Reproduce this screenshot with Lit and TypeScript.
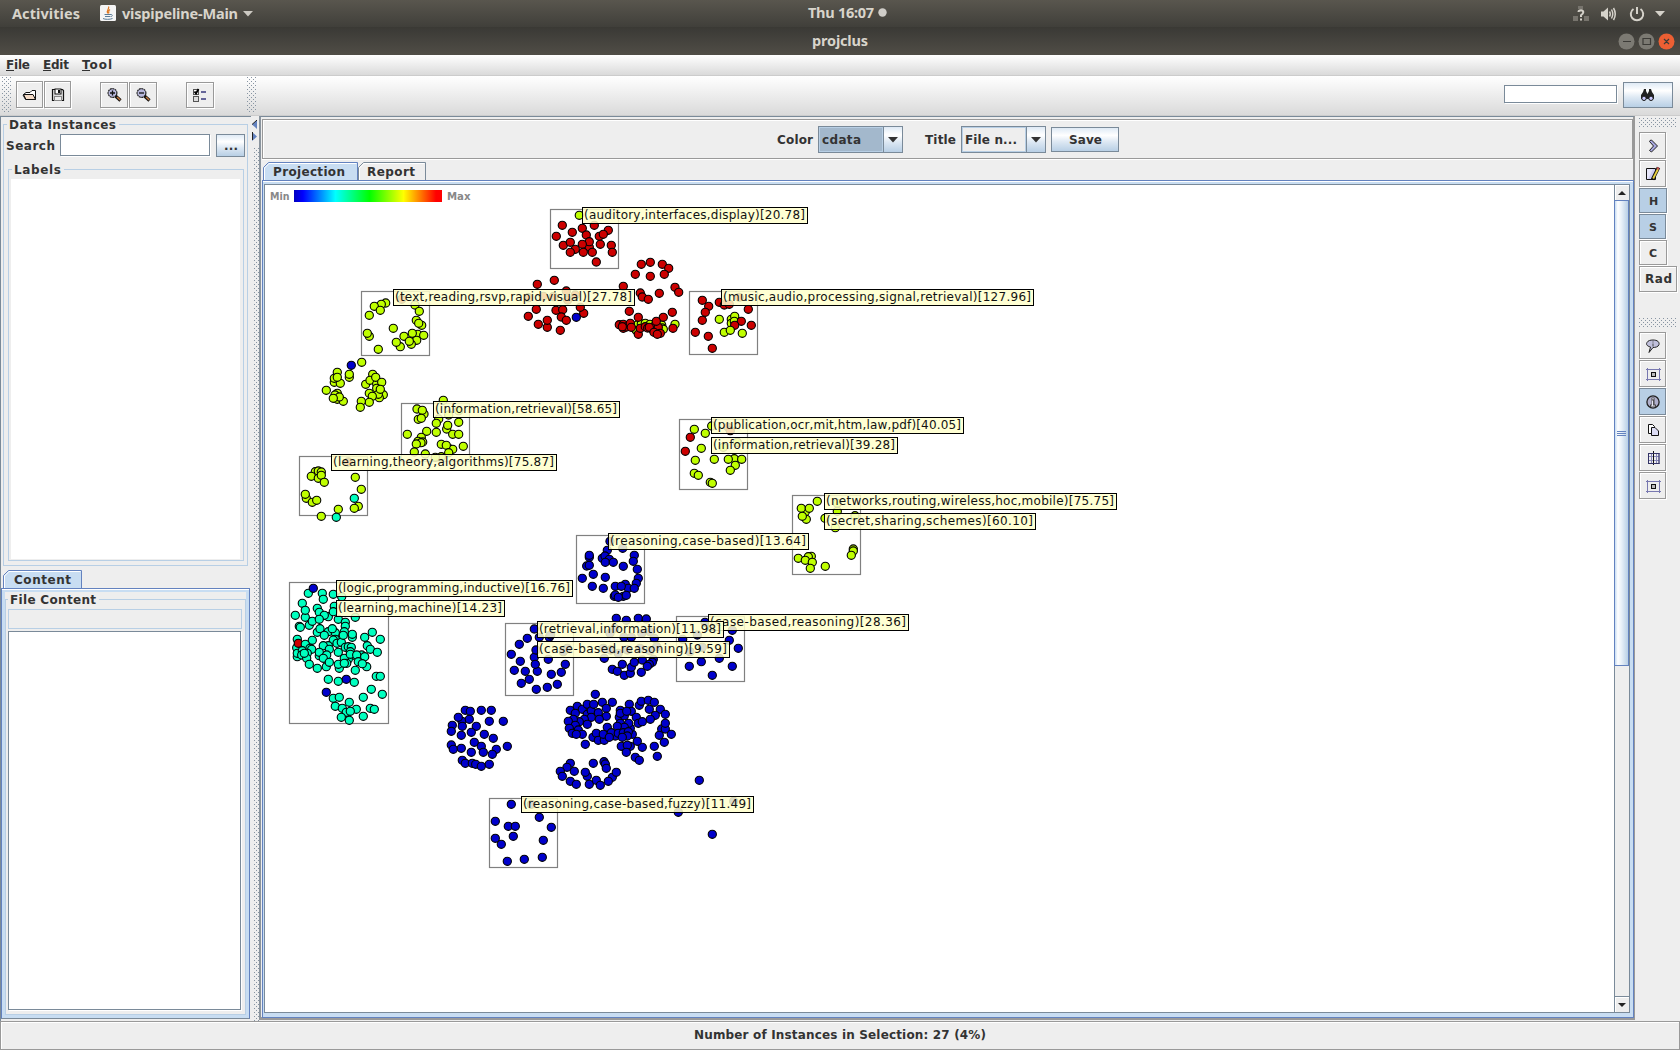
import { LitElement, html, svg, css, TemplateResult } from "lit";
import { customElement } from "lit/decorators.js";

type Group = { x: number; y: number; pts: string };
type Box = [number, number, number, number];
type Tag = [number, number, number, string];

const COLORS: Record<string, string> = { b: "#0000cc", r: "#cc0000", t: "#00ffbf", l: "#bfff00" };

// Points are "x,y" in thirds of a pixel from the group origin; a letter switches the class colour.
const GROUPS: Group[] = [
  { x: 280, y: 260, pts: "r 365,118 l 317,129 304,133 283,139 301,151 268,166 405,135 418,154 409,181 425,196 416,190 340,205 268,229 262,220 372,229 413,223 397,220 431,226 410,241 394,253 388,244 361,260 349,247 295,268 b 214,316 l 245,307 172,337 163,367 163,355 181,370 172,352 208,352 208,343 139,391 172,400 165,405 172,418 190,424 178,411 160,415 278,343 257,373 270,361 290,372 287,352 305,367 290,385 268,400 310,404 298,413 295,403 301,388 277,409 268,427 244,424 241,442" },
  { x: 280, y: 260, pts: "l 490,421 411,447 432,462 427,451 415,478 424,475 382,523 440,514 469,517 476,477 506,465 536,452 469,490 500,507 503,496 536,487 518,523 536,523 424,532 428,546 414,544 423,548 409,552 403,576 436,582 484,553 509,567 518,568 499,556 550,559 484,590 506,578 466,592 r 205,606 l 106,635 115,633 124,636 94,649 115,655 124,646 133,667 226,652 244,688 79,715 76,703 97,727 110,721 t 223,715 l 235,739 223,745 175,748 124,769 t 169,772" },
  { x: 500, y: 190, pts: "r 112,283 163,271 85,323 199,303 130,319 160,320 203,330 226,315 109,358 85,379 115,403 142,412 142,391 168,361 188,359 184,381 199,391 251,370 241,352 b 229,382 r 181,421 l 238,76 r 187,106 247,115 283,106 325,121 217,127 169,139 259,135 298,139 310,133 190,166 211,157 268,172 268,155 247,163 301,163 334,166 337,187 226,178 211,187 250,187 277,187 289,216" },
  { x: 500, y: 190, pts: "r 424,223 451,217 487,223 506,235 406,253 493,253 451,259 370,289 525,292 536,307 421,309 427,321 445,328 478,310 388,364 517,367 l 408,420 412,405 424,402 436,400 450,403 410,422 485,405 487,414 490,418 r 415,382 490,382 358,404 370,415 370,403 379,411 391,400 367,410 394,412 415,433 421,415 436,410 443,414 460,421 466,405 475,412 469,394 448,412 462,427 481,430 472,433 l 525,403 r 519,415" },
  { x: 500, y: 190, pts: "r 607,331 626,349 616,367 658,337 673,345 688,343 745,358 718,322 607,391 l 658,388 694,388 704,379 694,400 703,394 r 724,394 704,406 754,406 586,427 625,439 637,475 l 673,427 691,421 727,430" },
  { x: 660, y: 400, pts: "l 103,88 155,78 136,100 r 205,82 211,92 91,112 76,154 l 190,142 232,127 124,145 106,181 163,178 223,176 205,178 245,178 226,196 211,211 103,220 115,226 151,247 157,250 472,304 436,335 424,325 448,325 439,358 427,349 495,355 532,310 532,334 585,347 526,383 580,447 580,453 574,466 415,475 454,469 445,470 436,481 457,487 451,505 496,499" },
  { x: 280, y: 560, pts: "t 85,100 b 100,85 t 127,100 130,118 160,103 185,110 67,130 76,172 76,151 46,166 112,145 118,157 145,170 133,166 88,196 97,184 118,178 58,199 61,202 163,139 160,155 175,178 196,187 196,199 226,172 112,217 120,206 145,215 166,218 157,206 133,226 193,215 217,232 217,223 166,238 160,240 171,250 184,247 190,226 277,217 254,232 301,238 52,238 97,241 50,263 r 55,250 t 52,290 52,280 76,253 90,265 95,268 82,280 67,272 65,285 80,295 73,280 88,313 145,257 130,257 148,268 118,287 118,277 140,285 130,295 139,320 148,307 112,325 175,277 196,262 205,260 214,262 178,325 175,313 205,298 193,295 200,310 193,310 211,275 230,290 211,283 245,285 230,285 254,290 235,305 260,320 247,311 226,331 262,257 271,268 292,277 145,358 175,364 b 199,358 t 223,367 289,349 301,349 b 139,397 t 160,415 178,412 166,439 208,427 187,445 199,457 229,448 211,454 184,472 208,481 250,469 250,412 274,388 307,403 271,445 283,448" },
  { x: 490, y: 520, pts: "b 360,64 352,91 398,85 298,112 298,106 290,138 298,136 337,115 345,108 358,118 346,127 370,127 433,106 430,124 400,139 442,148 277,175 310,163 346,172 307,199 340,205 445,175 439,190 406,193 376,199 415,205 433,205 394,199 373,229 376,225 400,229 409,226 385,232 133,327 112,355 88,373 64,403 91,424 73,451 106,454 133,412 142,454 136,433 138,390 148,352 178,352 182,345 220,395 232,385 175,418 226,433 214,457 184,463 118,478 94,490 139,508 172,502 202,493" },
  { x: 490, y: 520, pts: "b 379,295 409,301 445,295 469,297 374,325 360,340 402,352 424,352 455,340 480,335 493,355 340,385 362,390 385,400 412,390 450,385 480,392 500,380 343,415 397,433 367,448 382,454 403,466 421,460 424,442 433,427 457,420 490,418 487,427 478,433 472,439 454,457 645,307 727,331 718,361 745,385 578,358 622,345 600,395 637,382 634,425 688,415 598,439 727,439 667,466" },
  { x: 430, y: 680, pts: "b 106,91 121,94 154,91 184,91 96,124 85,112 118,118 178,124 220,124 67,136 97,139 139,139 64,154 94,166 124,157 163,163 190,175 133,187 64,195 70,208 94,205 154,199 124,217 160,217 199,208 187,223 232,199 97,241 106,250 127,250 137,253 154,259 178,253 421,250 411,262 391,274 433,274 397,289 421,304 439,313 490,250 522,245 526,252 529,265 472,289 466,277 478,313 499,301 511,316 547,292 535,304 559,277" },
  { x: 430, y: 680, pts: "b 496,43 421,91 442,79 457,88 436,100 472,103 472,73 484,92 491,73 484,112 505,98 517,67 547,67 529,85 529,109 508,118 463,118 472,133 448,125 430,118 415,124 436,136 418,145 445,150 427,160 457,163 439,163 466,193 532,142 489,172 499,160 505,181 523,181 520,163 556,168 544,158 538,172 598,73 571,91 568,112 583,107 571,100 604,94 590,94 628,76 634,64 655,61 673,67 658,88 691,88 676,106 706,103 661,118 619,112 625,130 637,125 695,147 706,147 706,130 688,166 724,163 703,187 673,199 637,202 622,184 607,163 601,145 596,130 571,130 583,142 562,139 565,160 580,158 595,155 592,168 577,172 574,199 601,199 592,196 589,217 616,232 628,241 682,229 808,301 847,463 745,397 911,364 244,373 304,373 328,412 364,442 235,439 256,439 250,469 196,424 196,475 214,493 340,481 283,538 337,532 232,544" },
];

const BOXES: Box[] = [
  [550, 209, 68, 59], [361, 291, 68, 64], [401, 403, 68, 58], [299, 456, 68, 59],
  [689, 291, 68, 63], [679, 419, 68, 70], [792, 495, 68, 79], [576, 535, 68, 68],
  [505, 623, 68, 72], [676, 616, 68, 65], [289, 582, 99, 141], [489, 798, 68, 69],
];

const TAGS: Tag[] = [
  [582, 207, 225, "(auditory,interfaces,display)[20.78]"],
  [393, 289, 241, "(text,reading,rsvp,rapid,visual)[27.78]"],
  [721, 289, 312, "(music,audio,processing,signal,retrieval)[127.96]"],
  [433, 401, 186, "(information,retrieval)[58.65]"],
  [331, 454, 225, "(learning,theory,algorithms)[75.87]"],
  [711, 417, 252, "(publication,ocr,mit,htm,law,pdf)[40.05]"],
  [711, 437, 186, "(information,retrieval)[39.28]"],
  [824, 493, 292, "(networks,routing,wireless,hoc,mobile)[75.75]"],
  [824, 513, 211, "(secret,sharing,schemes)[60.10]"],
  [608, 533, 200, "(reasoning,case-based)[13.64]"],
  [336, 580, 236, "(logic,programming,inductive)[16.76]"],
  [336, 600, 168, "(learning,machine)[14.23]"],
  [708, 614, 200, "(case-based,reasoning)[28.36]"],
  [537, 621, 186, "(retrieval,information)[11.98]"],
  [537, 641, 192, "(case-based,reasoning)[9.59]"],
  [521, 796, 232, "(reasoning,case-based,fuzzy)[11.49]"],
];

function dots(g: Group) {
  let fill = COLORS.b;
  const out: TemplateResult[] = [];
  for (const tok of g.pts.split(" ")) {
    if (COLORS[tok]) {
      fill = COLORS[tok];
      continue;
    }
    const [px, py] = tok.split(",").map(Number);
    out.push(svg`<circle cx=${(g.x + px / 3).toFixed(1)} cy=${(g.y + py / 3).toFixed(1)} r="4.1" fill=${fill}></circle>` as unknown as TemplateResult);
  }
  return out;
}

// A line of text held to a given advance width.
const fit = (text: string, w: number, cls = "", key = false) => html`<svg class="fit ${cls}" width=${w} height="16">
  <text x="0" y=${cls === "sys" ? 13.5 : 12} textLength=${w}>${text}</text>
  ${key ? svg`<path d="M0 13.500H8" stroke="#333"/>` : ""}
</svg>`;

const icon = (body: unknown, w = 16, h = 16) =>
  html`<svg class="icon" width=${w} height=${h} viewBox="0 0 ${w} ${h}">${body}</svg>`;

const magnifier = (plus: boolean) => svg`
  <circle cx="6.500" cy="6" r="4.400" fill="#b8b8dc" stroke="#222" stroke-width="1.200" stroke-dasharray="2 .5"/>
  <path d=${plus ? "M4 6H9M6.5 3.5V8.5" : "M4 6H9"} stroke="#111" stroke-width="1.300"/>
  <path d="M9.500 9L14.500 13.500" stroke="#111" stroke-width="3.200"/>
  <path d="M11 10L14.200 13" stroke="#c8783c" stroke-width="1.400"/>`;

const ICONS = {
  open: svg`<path d="M1 8L4 5.500H8L10 3.500H13.500V12.500H3.500Z" fill="#fff" stroke="#111"/><path d="M1.500 7.500H11L13.500 12.500H4Z" fill="#f5dcc8" stroke="#111"/>`,
  save: svg`<path d="M2.500 2.500H12.500L13.500 3.500V13.500H2.500Z" fill="#ddd" stroke="#111" stroke-width="1.200"/><rect x="5" y="2" width="6" height="5" fill="#fff" stroke="#111"/><rect x="8" y="3" width="2" height="3" fill="#111"/><rect x="4.500" y="9.500" width="7" height="4" fill="#eee" stroke="#888"/>`,
  list: svg`<rect x="1.500" y="2.500" width="5" height="5" fill="#fff" stroke="#555"/><path d="M2.500 4.500L4 6.500L6.500 2" stroke="#000" stroke-width="1.800" fill="none"/><rect x="1.500" y="9.500" width="5" height="5" fill="#ddd" stroke="#555"/><path d="M9 5H14M9 12H14" stroke="#666699" stroke-width="2"/>`,
  binoculars: svg`<path d="M4 2H6V4L7.500 7V12H1V8L3 5Z M9 4V2H11L12 5L14 8V12H7.500V7Z" fill="#222"/><circle cx="4" cy="11.300" r="2.200" fill="#ccccff" stroke="#111"/><circle cx="11" cy="11.300" r="2.200" fill="#ccccff" stroke="#111"/>`,
  chevron: svg`<path d="M5 2.500L6.500 2L12.500 8L6.500 14L4.500 12.500L8.500 8L4.500 3.500Z" fill="#a8a8e0" stroke="#222" stroke-width="1"/>`,
  edit: svg`<path d="M1.500 2.500H10.500V13.500H1.500Z" fill="#ccccf0" stroke="#111"/><path d="M2 3H8L3 13H2Z" fill="#fff" opacity=".5"/><path d="M13.500 1.500L7.500 13.500" stroke="#111" stroke-width="3.600"/><path d="M13 3L8.200 12.500" stroke="#e8d040" stroke-width="1.800"/><path d="M12 2L14 3" stroke="#c85050" stroke-width="2"/>`,
  balloon: svg`<path d="M8 2C12.500 2 14.500 4 14 6.500C13.500 9 10 9.500 8 9.500L4 14.500L5.500 9C1.500 8 1 6 2 4.500C3 2.500 5.500 2 8 2Z" fill="#c0c0dc" stroke="#222"/><path d="M8 3.500V4.500M8 5.500V8.500" stroke="#444"/>`,
  frame: svg`<path d="M2.500 2V15M14.500 2V15M1 3.500H16M1 13.500H16" stroke="#7878b0" fill="none"/><rect x="6.500" y="6.500" width="4" height="4" fill="#bbb" stroke="#111"/>`,
  info: svg`<circle cx="8" cy="8" r="6.100" fill="#b0b0cc" stroke="#222" stroke-width="1.300"/><path d="M6.500 3.500H9.500V6V10.500H11V13H5V10.500H6.500Z" fill="#444"/><path d="M8 4V5.500M7.500 6.500V11.500M6 12H10" stroke="#e8e8f4" stroke-width="1.200"/>`,
  copy: svg`<path d="M3.500 2.500H7.500L9.500 4.500V11.500H3.500Z" fill="#fff" stroke="#111"/><path d="M6.500 5.500H10L13.500 9V13.500H6.500Z" fill="#ddddf5" stroke="#111"/>`,
  grid: svg`<path d="M3.500 3V14M6.500 3V14M11.500 3V14M14 3V14M3 6.500H14M3 10.500H14" stroke="#8888b8"/><path d="M8.500 1V15" stroke="#111"/><path d="M3 3.500H14.500M3 13.500H14.500M3.500 3V14M14 3V14" stroke="#333366"/>`,
};

@customElement("app-root")
export class AppRoot extends LitElement {
  static styles = css`
    :host { display: block; width: 1680px; height: 1050px; background: #eee; overflow: hidden; font: bold 12px/15px "DejaVu Sans", sans-serif; color: #333; }
    * { box-sizing: border-box; }
    svg { display: block; flex: none; }
    .fit { overflow: visible; }
    .fit text, .tab text { font: bold 12px "DejaVu Sans", sans-serif; fill: #333; }
    .fit.sys text { font: 700 14.5px "Noto Sans", sans-serif; fill: #d8d4cb; }
    .fit.small text { font-size: 11px; }
    .top { height: 27px; display: flex; align-items: center; background: linear-gradient(#59564e, #403f3a); padding-left: 12px; }
    .top > .fit { margin-bottom: 1px; }
    .java { margin: 0 6px 1px 20px; }
    .arrow { margin-left: 5px; }
    .clock { margin: -3px 0 0 555px; }
    .led { margin: -2px 0 0 4px; }
    .net { margin-left: 686px; }
    .vol { margin-left: 11px; }
    .pow { margin-left: 12px; }
    .caret { margin-left: 10px; }
    .title { height: 28px; display: flex; align-items: center; background: linear-gradient(#3a3934, #3c3b37 10%, #504d46); padding-left: 812px; }
    .title > .fit { margin-bottom: 3px; }
    .wins { margin-left: 750px; }
    .menu { height: 21px; display: flex; gap: 13px; padding: 2px 0 0 6px; background: linear-gradient(#fff, #dadada); border-bottom: 1px solid #ccc; }
    .bar { height: 40px; display: flex; align-items: center; background: linear-gradient(#fff, #dadada); border-bottom: 1px solid #ccc; padding: 0 8px 2px 2px; }
    .grip { background: radial-gradient(circle at .5px .5px, #8794a2 .7px, transparent .8px) 0 0 / 4px 4px, radial-gradient(circle at 2.5px 2.5px, #8794a2 .7px, transparent .8px) 0 0 / 4px 4px; flex: none; }
    .grip.v { width: 10px; height: 36px; }
    .grip.h { width: 38px; height: 10px; }
    .btn { display: flex; align-items: center; justify-content: center; flex: none; width: 27px; height: 27px; border: 1px solid #999; background: #eee; box-shadow: 1px 1px #fff, inset 1px 1px #fff; }
    .btn.w { width: 28px; height: 26px; }
    .btn.on { background: #b8cfe5; border-color: #7a8a99; box-shadow: 1px 1px #fff; }
    .btn.short { height: 25px; }
    .btn.rad { width: 38px; height: 26px; }
    .btn.metal { background: linear-gradient(#dfeaf5, #fff 32%, #dde8f3 60%, #b8cfe5); border-color: #7a8a99; box-shadow: none; }
    .g16 { margin-left: 4px; }
    .g2 { margin-left: 1px; }
    .g100 { margin-left: 29px; }
    .g186 { margin-left: 29px; }
    .g247 { margin-left: 33px; }
    .find { width: 113px; height: 18px; margin: -1px 0 0 1247px; }
    .findbtn { width: 50px; height: 26px; margin-left: 6px; }
    .field { background: #fff; border: 1px solid #7a8a99; box-shadow: 1px 1px #fff; flex: none; }
    .body { display: flex; height: 905px; }
    .left { width: 251px; border: solid #7a8a99; border-width: 1px 0 0 1px; padding-left: 2px; flex: none; }
    fieldset { margin: 0; border: 1px solid #b8cfe5; padding: 0; min-width: 0; }
    legend { padding: 0 3px 0 2px; margin-left: 3px; height: 15px; }
    .data { width: 245px; height: 449px; }
    .search { display: flex; align-items: flex-start; padding: 2px 0 0 2px; height: 25px; }
    .search > .fit { margin-top: 4px; }
    .search .field { width: 150px; height: 22px; margin-left: 5px; }
    .search .btn { width: 29px; height: 23px; margin-left: 6px; }
    .labels { width: 236px; height: 399px; margin: 5px 0 0 4px; padding: 2px 3px 2px 2px; }
    .labels legend { margin-left: 1px; }
    .blank { background: #fff; height: 380px; }
    .tabs { display: flex; align-items: flex-end; }
    .left .tabs { height: 22px; }
    .pane { width: 249px; height: 431px; margin-left: -2px; border: 1px solid #6382bf; border-bottom-color: #7a8a99; background: #eee; box-shadow: inset 0 1px #fff, inset 0 0 0 3px #c8ddf2; padding: 3px; }
    .file { width: 241px; height: 423px; }
    .file legend { margin-left: 2px; }
    .file .line { width: 234px; height: 20px; border: 1px solid #b8cfe5; margin: 2px 0 2px 2px; }
    .file .area { width: 233px; height: 379px; margin-left: 2px; }
    .split { width: 8px; padding: 4px 0 0 1px; display: flex; flex-direction: column; flex: none; }
    .split .grip { flex: 1; width: 5px; margin-left: 2px; margin-top: 6px; }
    .work { width: 1376px; height: 904px; border: solid #7a8a99; border-width: 1px 2px 3px 2px; border-color: #7a8a99 #999 #999 #8a949e; padding: 2px 0 0 1px; flex: none; }
    .controls { height: 40px; width: 1371px; border: 1px solid #999; box-shadow: inset 1px 1px #fff, 0 1px #fff; display: flex; align-items: flex-start; padding: 0 0 0 514px; }
    .controls > .fit, .title2 { margin-top: 12px; }
    .combo { display: flex; width: 85px; height: 27px; border: 1px solid #7a8a99; flex: none; margin: 6px 0 0 5px; }
    .val { flex: 1; border: 1px solid #b8cfe5; padding: 4px 0 0 2px; }
    .sel .val { background: #a3b8cc; }
    .drop { width: 19px; border-left: 1px solid #7a8a99; display: flex; align-items: center; justify-content: center; background: linear-gradient(#dfeaf5, #fff 32%, #dde8f3 60%, #b8cfe5); }
    .title2 { margin-left: 22px; }
    .savebtn { width: 68px; height: 25px; margin: 7px 0 0 5px; }
    .work .tabs { height: 21px; padding-left: 2px; margin-left: -1px; }
    .proj { height: 838px; width: 1372px; border: 1px solid #6382bf; background: #c8ddf2; box-shadow: inset 0 1px #fff; padding: 3px 3px 4px 1px; }
    .view { border: 1px solid #7a8a99; display: flex; background: #fff; height: 829px; }
    .map circle { stroke: #000; stroke-width: 1.1; }
    .map .box { fill: none; stroke: #808080; stroke-width: 1.2; }
    .map .tag { fill: #ffffcc; fill-opacity: .86; stroke: #000; }
    .map text { font: 12px "DejaVu Sans", sans-serif; fill: #111; }
    .map .scale { font: bold 10px "DejaVu Sans", sans-serif; fill: #888; }
    .scroll { width: 16px; display: flex; flex-direction: column; border-left: 1px solid #7a8a99; background: #eee; }
    .sb { height: 15px; display: flex; align-items: center; justify-content: center; box-shadow: inset 1px 1px #fff; }
    .thumb { height: 466px; margin-left: -1px; padding-top: 2px; border: 1px solid #6382bf; background: linear-gradient(90deg, #c8ddf2, #fff 22%, #e8f0f8 50%, #b8cfe5); display: flex; align-items: center; justify-content: center; }
    .track { flex: 1; border-bottom: 1px solid #7a8a99; }
    .side { flex: 1; padding: 2px 0 0 4px; display: flex; flex-direction: column; align-items: flex-start; gap: 1px; }
    .side .grip { margin-bottom: 3px; }
    .side .second { margin-top: 25px; }
    .status { height: 29px; border: 1px solid #999; box-shadow: inset 1px 1px #fff; display: flex; align-items: center; justify-content: center; padding-bottom: 2px; }
  `;

  private header() {
    return html`
      <div class="top">
        ${fit("Activities", 68, "sys")}
        <svg class="java" width="16" height="16"><rect width="16" height="16" rx="1.500" fill="#f4f4f4"/><path d="M8.500 1.500C10 4 5.500 5 8 8.500M10 4.500C7.500 6 9.500 6.500 8.500 8.500" fill="none" stroke="#e07820" stroke-width="1.200"/><path d="M4.500 9.500H11C13 9.500 12.500 11.500 11 11.500M5 11.500H10.500M3 13.500C5 14.600 10 14.600 12.500 13.500" fill="none" stroke="#5a7c98"/></svg>
        ${fit("vispipeline-Main", 116, "sys")}
        <svg class="arrow" width="10" height="6"><path d="M0 0H10L5 5.500Z" fill="#ccc9c2"/></svg>
        <div class="clock">${fit("Thu 16:07", 66, "sys")}</div>
        <svg class="led" width="9" height="9"><circle cx="4.500" cy="4.500" r="4.200" fill="#cfcdc8"/></svg>
        <svg class="net" width="16" height="16"><path d="M5 0H10V3H5ZM0 10H5V15H0ZM11 10H16V15H11Z" fill="#77746d"/><path d="M5.500 6Q5.500 4.200 8 4.200Q10.300 4.400 10.300 6.300Q10.300 7.600 8 9.200V11M8 12.500V14.500" fill="none" stroke="#d5d2ca" stroke-width="2"/></svg>
        <svg class="vol" width="17" height="16"><path d="M1 5.500H3.500L8 1.500V14.500L3.500 10.500H1Z" fill="#d5d2ca"/><path d="M9.500 5.500Q11 8 9.500 10.500M11.500 3.500Q14 8 11.500 12.500M13.500 2Q17 8 13.500 14" fill="none" stroke="#d5d2ca" stroke-width="1.500"/></svg>
        <svg class="pow" width="16" height="16"><path d="M4.500 3A6.200 6.200 0 1 0 11.500 3M8 1V8" fill="none" stroke="#d5d2ca" stroke-width="2"/></svg>
        <svg class="caret" width="10" height="6"><path d="M0 0H10L5 5.500Z" fill="#d5d2ca"/></svg>
      </div>
      <div class="title">
        ${fit("projclus", 56, "sys")}
        <svg class="wins" width="57" height="17">
          <circle cx="8.500" cy="8.500" r="8" fill="#7c7a73"/><circle cx="28.500" cy="8.500" r="8" fill="#7c7a73"/><circle cx="48.500" cy="8.500" r="8" fill="#ec5f33"/>
          <path d="M5 8.500H13M25 5.500H32.500V11.500H25ZM46 6L51 11M51 6L46 11" fill="none" stroke="#3c3b37" stroke-width="1.200"/>
        </svg>
      </div>
      <div class="menu">
        ${fit("File", 24, "", true)}${fit("Edit", 26, "", true)}${fit("Tool", 30, "", true)}
      </div>
      <div class="bar">
        <div class="grip v"></div>
        <div class="btn g16">${icon(ICONS.open)}</div>
        <div class="btn g2">${icon(ICONS.save)}</div>
        <div class="btn w g100">${icon(magnifier(true))}</div>
        <div class="btn w g2">${icon(magnifier(false))}</div>
        <div class="btn w g186">${icon(ICONS.list)}</div>
        <div class="grip v g247"></div>
        <div class="field find"></div>
        <div class="btn metal findbtn">${icon(ICONS.binoculars)}</div>
      </div>`;
  }

  private tab(text: string, w: number, tx: number, tw: number, on: boolean) {
    return html`<svg class="tab" width=${w} height="18">
      <path d="M.5 19V5.500L5.500 .5H${w - 0.5}V19" fill=${on ? "#c8ddf2" : "#eee"} stroke=${on ? "#6382bf" : "#7a8a99"}></path>
      <path d="M1.500 18V6L6 1.500H${w - 1.5}" fill="none" stroke="#fff"></path>
      <text x=${tx} y="14" textLength=${tw}>${text}</text>
    </svg>`;
  }

  private leftPane() {
    return html`<div class="left">
      <fieldset class="data">
        <legend>${fit("Data Instances", 107)}</legend>
        <div class="search">${fit("Search", 49)}<div class="field"></div><div class="btn metal">${fit("...", 14)}</div></div>
        <fieldset class="labels"><legend>${fit("Labels", 47)}</legend><div class="blank"></div></fieldset>
      </fieldset>
      <div class="tabs">${this.tab("Content", 79, 11, 57, true)}</div>
      <div class="pane">
        <fieldset class="file">
          <legend>${fit("File Content", 86)}</legend>
          <div class="line"></div>
          <div class="field area"></div>
        </fieldset>
      </div>
    </div>`;
  }

  private map() {
    return html`<svg class="map" width="1349" height="827" viewBox="265 185 1349 827">
      <defs><linearGradient id="ramp"><stop offset="0" stop-color="#0000c0"/><stop offset=".06" stop-color="#00f"/><stop offset=".28" stop-color="#0ff"/><stop offset=".51" stop-color="#0f0"/><stop offset=".74" stop-color="#ff0"/><stop offset=".96" stop-color="#f00"/></linearGradient></defs>
      <text class="scale" x="270" y="200" textLength="19.500" lengthAdjust="spacingAndGlyphs">Min</text>
      <rect x="294" y="190" width="148" height="12" fill="url(#ramp)"/>
      <text class="scale" x="447" y="200" textLength="23.500" lengthAdjust="spacingAndGlyphs">Max</text>
      ${BOXES.map(([x, y, w, h]) => svg`<rect class="box" x=${x + 0.5} y=${y + 0.5} width=${w} height=${h}></rect>`)}
      ${GROUPS.map(dots)}
      ${TAGS.map(([x, y, w, t]) => svg`<rect class="tag" x=${x + 0.5} y=${y + 0.5} width=${w} height="16"></rect><text x=${x + 2} y=${y + 12} textLength=${w - 4}>${t}</text>`)}
    </svg>`;
  }

  private work() {
    const down = html`<svg width="10" height="6"><path d="M0 0H10L5 5.500Z" fill="#333"/></svg>`;
    return html`<div class="work">
      <div class="controls">
        ${fit("Color", 36)}
        <div class="combo sel"><div class="val">${fit("cdata", 39)}</div><div class="drop">${down}</div></div>
        <div class="title2">${fit("Title", 31)}</div>
        <div class="combo"><div class="val">${fit("File n...", 52)}</div><div class="drop">${down}</div></div>
        <div class="btn metal savebtn">${fit("Save", 33)}</div>
      </div>
      <div class="tabs">${this.tab("Projection", 95, 10, 72, true)}${this.tab("Report", 68, 9, 48, false)}</div>
      <div class="proj"><div class="view">
        ${this.map()}
        <div class="scroll">
          <div class="sb"><svg width="8" height="4"><path d="M0 4L4 0L8 4Z" fill="#222"/></svg></div>
          <div class="thumb"><svg width="10" height="6"><path d="M0 .5H9M0 2.500H9M0 4.500H9" stroke="#6382bf"/></svg></div>
          <div class="track"></div>
          <div class="sb"><svg width="8" height="4"><path d="M0 0L4 4L8 0Z" fill="#222"/></svg></div>
        </div>
      </div></div>
    </div>`;
  }

  private side() {
    return html`<div class="side">
      <div class="grip h"></div>
      <div class="btn">${icon(ICONS.chevron)}</div>
      <div class="btn">${icon(ICONS.edit)}</div>
      <div class="btn w short on">${fit("H", 9, "small")}</div>
      <div class="btn short on">${fit("S", 8, "small")}</div>
      <div class="btn w short">${fit("C", 8, "small")}</div>
      <div class="btn rad">${fit("Rad", 27)}</div>
      <div class="grip h second"></div>
      <div class="btn">${icon(ICONS.balloon)}</div>
      <div class="btn">${icon(ICONS.frame)}</div>
      <div class="btn on">${icon(ICONS.info)}</div>
      <div class="btn">${icon(ICONS.copy)}</div>
      <div class="btn">${icon(ICONS.grid)}</div>
      <div class="btn">${icon(ICONS.frame)}</div>
    </div>`;
  }

  render() {
    return html`
      ${this.header()}
      <div class="body">
        ${this.leftPane()}
        <div class="split">
          <svg width="6" height="22"><path d="M5 0V9L0 4.500Z" fill="#6382bf"/><path d="M5 0L0 4.500" stroke="#222"/><path d="M0 12V21L5 16.500Z" fill="#6382bf"/><path d="M.5 12V20" stroke="#222"/></svg>
          <div class="grip"></div>
        </div>
        ${this.work()}
        ${this.side()}
      </div>
      <div class="status">${fit("Number of Instances in Selection: 27 (4%)", 292)}</div>`;
  }
}
